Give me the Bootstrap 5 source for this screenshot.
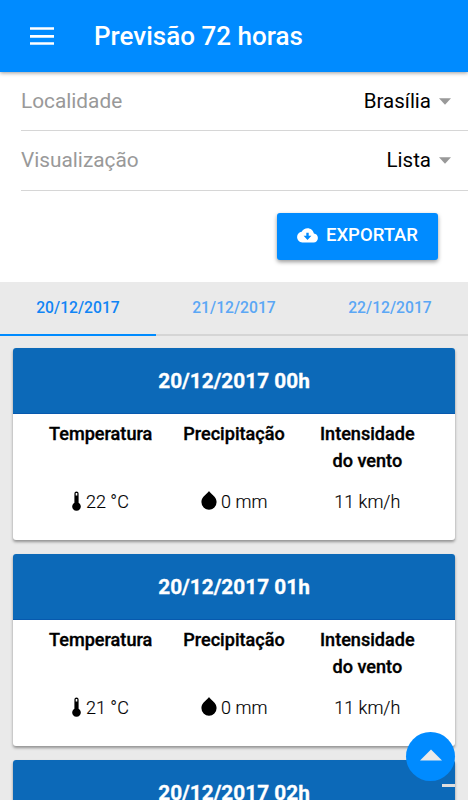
<!DOCTYPE html>
<html lang="pt-BR">
<head>
<meta charset="utf-8">
<meta name="viewport" content="width=device-width, initial-scale=1">
<title>Previsão 72 horas</title>
<link href="https://cdn.jsdelivr.net/npm/bootstrap@5.3.0/dist/css/bootstrap.min.css" rel="stylesheet">
<style>
  html, body { height: 100%; }
  body { font-family: Roboto, "Liberation Sans", sans-serif; color: #000; background: #eaeaea; line-height: 1.2; }
  .screen { height: 100vh; }
  .topbar { height: 72px; flex: none; padding: 0 28px; background: #008bff; box-shadow: 0 1px 4px rgba(0,0,0,.4); z-index: 2; }
  .topbar h1 { font-size: 26px; font-weight: 500; margin: 2px 0 0 38px; }
  .filters { height: 210px; flex: none; }
  .filter-row { height: 60px; margin-left: 21px; padding-right: 17px; border-bottom: 1px solid #d6d6d6; font-size: 20.5px; }
  .filter-row:first-child { height: 59px; }
  .filter-name { color: #999; font-size: 20.8px; }
  .btn-export { width: 161px; height: 47px; margin: 22px 30px 0 0; padding: 0 0 2px; border: 0; border-radius: 3px; background: #008bff; color: #fff; font-size: 18.5px; font-weight: 500; box-shadow: 0 2px 4px rgba(0,0,0,.4); }
  .day-tabs { height: 54px; flex: none; }
  .day-tabs .nav-link { height: 54px; padding: 1px 0 0; border-radius: 0; border-bottom: 2px solid #d5d5d5; color: #5ba7f5; font-size: 15.7px; font-weight: 500; }
  .day-tabs .nav-link.active { color: #1185f5; border-color: #008bff; }
  .forecasts { padding: 12px 13px 0; }
  .forecast { height: 192px; margin-bottom: 14px; flex: none; border: 0; border-radius: 3px; box-shadow: 0 2px 3px rgba(0,0,0,.38); overflow: hidden; }
  .forecast-head { height: 66px; padding-top: 2px; flex: none; background: #0c69b8; border-bottom: 1px solid #0759ae; color: #fff; font-size: 20.8px; font-weight: 700; -webkit-text-stroke: .3px #fff; }
  .measures { margin: 0 21px; padding-top: 6px; font-size: 18px; }
  .measure-name { height: 68px; font-size: 18.1px; font-weight: 500; line-height: 27.2px; -webkit-text-stroke: .35px #000; }
  .measure-value { height: 27px; font-weight: 300; -webkit-text-stroke: .15px #000; }
  .value-icon { position: relative; top: -1px; margin-right: 4.500px; }
  .to-top { position: absolute; right: 13px; bottom: 19px; width: 49px; height: 49px; padding: 0 0 4px; border: 0; background: #008bff; }
  .corner-dash { position: absolute; right: 13px; bottom: 13px; width: 13px; height: 3px; background: #dedede; }
</style>
</head>
<body>
<div class="screen position-relative d-flex flex-column overflow-hidden">
  <header class="topbar position-relative d-flex align-items-center text-white">
    <svg width="28" height="24" viewBox="0 0 28 24"><path d="M2 4.500h24M2 12.300h24M2 19.500h24" stroke="#fff" stroke-width="2.700"/></svg>
    <h1>Previsão 72 horas</h1>
  </header>

  <section class="filters bg-white">
    <div class="filter-row d-flex align-items-center">
      <span class="filter-name me-auto">Localidade</span><span class="filter-value">Brasília</span>
      <svg class="ms-2" width="12" height="7" viewBox="0 0 12 7"><path d="M0 .3h12L6 6.700z" fill="#999"/></svg>
    </div>
    <div class="filter-row d-flex align-items-center">
      <span class="filter-name me-auto">Visualização</span><span class="filter-value">Lista</span>
      <svg class="ms-2" width="12" height="7" viewBox="0 0 12 7"><path d="M0 .3h12L6 6.700z" fill="#999"/></svg>
    </div>
    <div class="d-flex justify-content-end">
      <button class="btn btn-export d-flex align-items-center justify-content-center" type="button">
        <svg class="me-2" width="21" height="15" viewBox="0 0 21 15"><path fill="#fff" fill-rule="evenodd" d="M16.900 5.500C16.300 2.400 13.700.2 10.500.2 8 .2 5.800 1.600 4.700 3.700 2.100 4 .1 6.200.1 9c0 3 2.300 5.400 5.200 5.400h11.300c2.400 0 4.300-2 4.300-4.500 0-2.400-1.800-4.300-4-4.400zM9.300 4.800h2.400v3h2.700L10.500 12 6.600 7.800h2.700z"/></svg>
        EXPORTAR
      </button>
    </div>
  </section>

  <nav class="day-tabs nav nav-fill">
    <a class="nav-link col active d-flex align-items-center justify-content-center" href="#">20/12/2017</a>
    <a class="nav-link col d-flex align-items-center justify-content-center" href="#">21/12/2017</a>
    <a class="nav-link col d-flex align-items-center justify-content-center" href="#">22/12/2017</a>
  </nav>

  <main class="forecasts d-flex flex-column overflow-hidden">
    <article class="card forecast">
      <div class="forecast-head d-flex align-items-center justify-content-center">20/12/2017 00h</div>
      <div class="measures row g-0 text-center">
        <div class="col-4"><div class="measure-name">Temperatura</div><div class="measure-value d-flex align-items-center justify-content-center"><svg class="value-icon" width="9" height="20" viewBox="0 0 9 20"><path d="M2.400 2.500a2.100 2.100 0 0 1 4.200 0v9.200a4.300 4.300 0 1 1-4.200 0z"/><path d="M4.500 2.100v2.400" stroke="#fff" stroke-width="1.600"/></svg>22 °C</div></div>
        <div class="col-4"><div class="measure-name">Precipitação</div><div class="measure-value d-flex align-items-center justify-content-center"><svg class="value-icon" width="16" height="19" viewBox="0 0 16 19"><path d="M8 0c1.300 2.600 7.600 5.500 7.600 11.100A7.600 7.600 0 0 1 .4 11.100C.4 5.500 6.700 2.600 8 0z"/></svg>0 mm</div></div>
        <div class="col-4"><div class="measure-name">Intensidade<br>do vento</div><div class="measure-value d-flex align-items-center justify-content-center">11 km/h</div></div>
      </div>
    </article>
    <article class="card forecast">
      <div class="forecast-head d-flex align-items-center justify-content-center">20/12/2017 01h</div>
      <div class="measures row g-0 text-center">
        <div class="col-4"><div class="measure-name">Temperatura</div><div class="measure-value d-flex align-items-center justify-content-center"><svg class="value-icon" width="9" height="20" viewBox="0 0 9 20"><path d="M2.400 2.500a2.100 2.100 0 0 1 4.200 0v9.200a4.300 4.300 0 1 1-4.200 0z"/><path d="M4.500 2.100v2.400" stroke="#fff" stroke-width="1.600"/></svg>21 °C</div></div>
        <div class="col-4"><div class="measure-name">Precipitação</div><div class="measure-value d-flex align-items-center justify-content-center"><svg class="value-icon" width="16" height="19" viewBox="0 0 16 19"><path d="M8 0c1.300 2.600 7.600 5.500 7.600 11.100A7.600 7.600 0 0 1 .4 11.100C.4 5.500 6.700 2.600 8 0z"/></svg>0 mm</div></div>
        <div class="col-4"><div class="measure-name">Intensidade<br>do vento</div><div class="measure-value d-flex align-items-center justify-content-center">11 km/h</div></div>
      </div>
    </article>
    <article class="card forecast">
      <div class="forecast-head d-flex align-items-center justify-content-center">20/12/2017 02h</div>
    </article>
  </main>

  <button class="btn to-top rounded-circle d-flex align-items-center justify-content-center" type="button" aria-label="Voltar ao topo">
    <svg width="22" height="12" viewBox="0 0 22 12"><path d="M0 11.500 11 .5l11 11z" fill="#eaeaea"/></svg>
  </button>
  <div class="corner-dash"></div>
</div>
<script src="https://cdn.jsdelivr.net/npm/bootstrap@5.3.0/dist/js/bootstrap.bundle.min.js"></script>
</body>
</html>
